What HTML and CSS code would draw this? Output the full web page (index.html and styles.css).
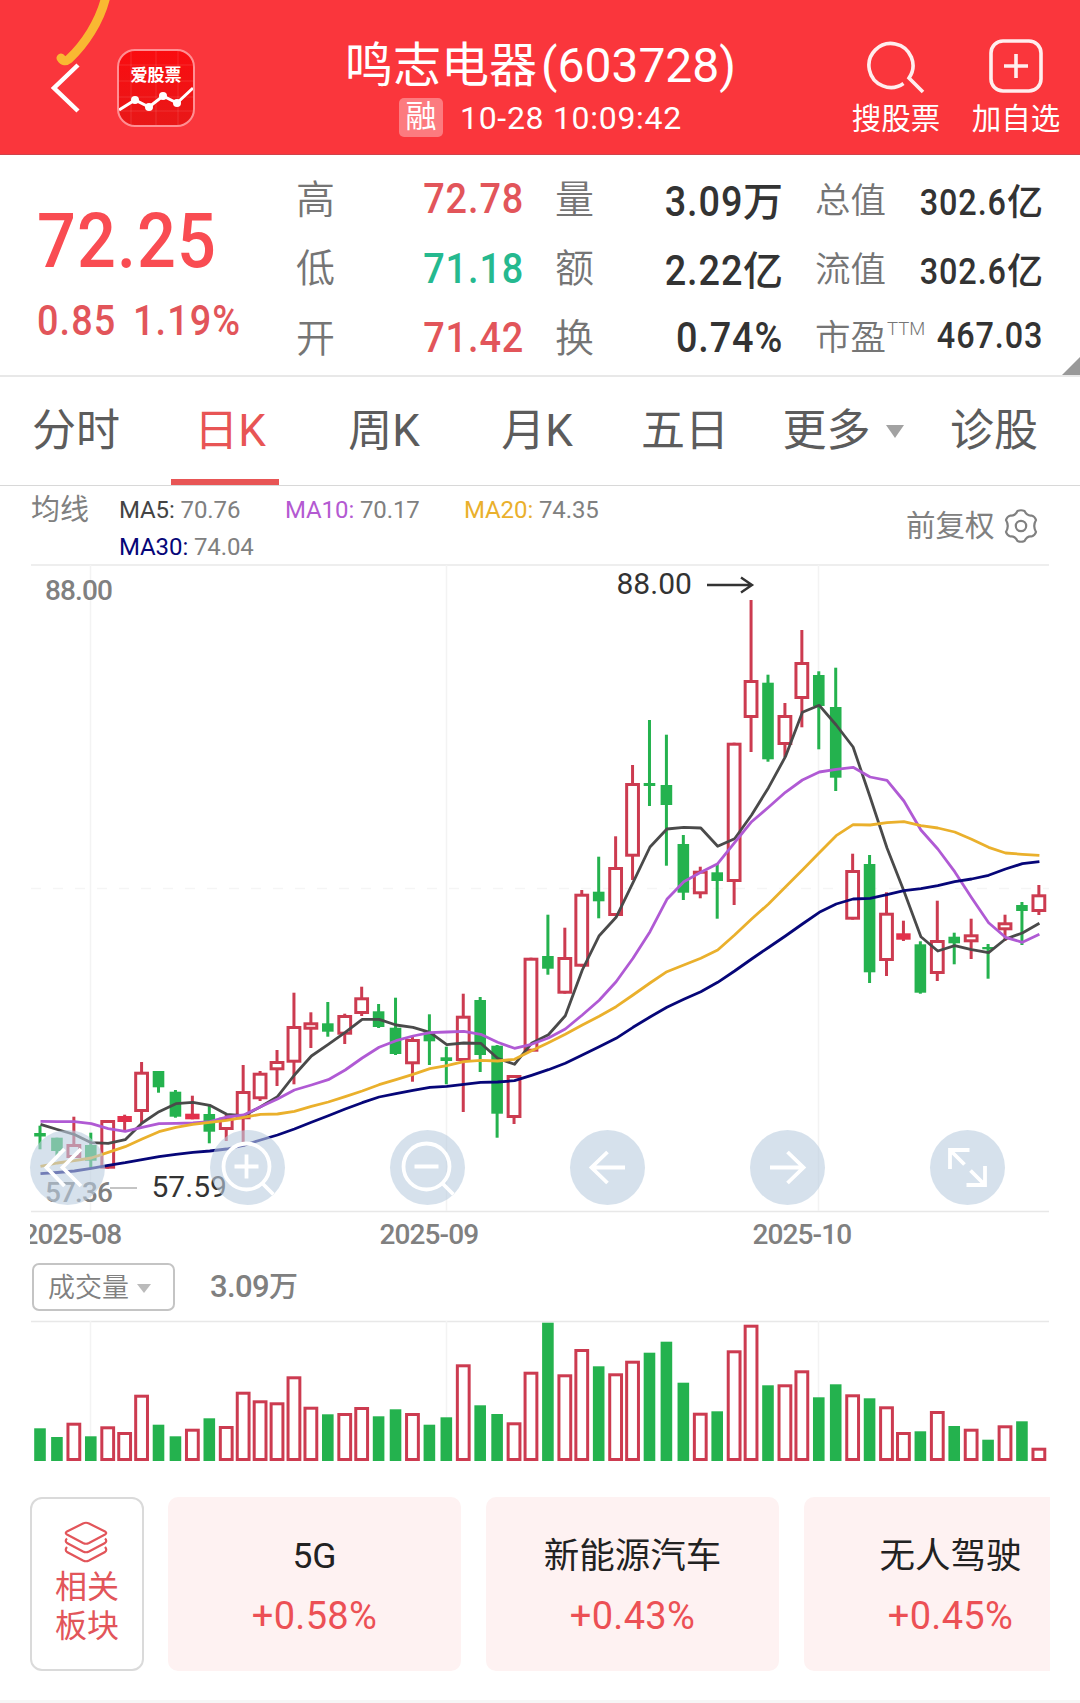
FILE: index.html
```html
<!DOCTYPE html>
<html lang="zh-CN">
<head>
    <meta charset="UTF-8">
    <meta name="viewport" content="width=device-width, initial-scale=1.0">
    <title>鸣志电器(603728)</title>
    <link rel="stylesheet" href="styles.css">
</head>
<body>
    <header class="header">
        <svg class="pen-mark" width="120" height="70" viewBox="0 0 120 70">
            <path d="M106 -4 C100 22 84 45 69 59 Q64 63 61 58"/>
        </svg>
        <svg class="back" width="34" height="54" viewBox="0 0 34 54">
            <path d="M29 4 L5 27 L29 50"/>
        </svg>
        <div class="app-logo">
            <span>爱股票</span>
            <svg width="74" height="74" viewBox="0 0 74 74">
                <path class="logo-grid" d="M12 0V74 M37 0V74 M59 0V74 M0 14H74 M0 30H74 M0 46H74 M0 60H74"/>
                <path class="logo-line" d="M0 59 L16 49 L30 56 L44 45 L58 52 L74 37"/>
                <circle cx="16" cy="49" r="4"/>
                <circle cx="30" cy="56" r="4"/>
                <circle cx="44" cy="45" r="4"/>
                <circle cx="58" cy="52" r="4"/>
            </svg>
        </div>
        <div class="title">
            <h1>鸣志电器<span>(603728)</span></h1>
            <div class="subtitle"><span class="badge">融</span><span class="time">10-28 10:09:42</span></div>
        </div>
        <div class="action search">
            <svg width="60" height="60" viewBox="0 0 60 60">
                <path d="M37.5 47.5 A22 22 0 1 1 43 42 L57 56"/>
            </svg>
            <span>搜股票</span>
        </div>
        <div class="action add">
            <svg width="60" height="60" viewBox="0 0 60 60">
                <rect x="5" y="5" width="50" height="50" rx="12"/>
                <path d="M30 18 V42 M18 30 H42"/>
            </svg>
            <span>加自选</span>
        </div>
    </header>

    <section class="quote">
        <div class="price">
            <div class="now">72.25</div>
            <div class="change">0.85 1.19%</div>
        </div>
        <dl class="stats first">
            <dt>高</dt><dd class="up"><b>72.78</b></dd>
            <dt>低</dt><dd class="down"><b>71.18</b></dd>
            <dt>开</dt><dd class="up"><b>71.42</b></dd>
        </dl>
        <dl class="stats second">
            <dt>量</dt><dd><b>3.09</b><i>万</i></dd>
            <dt>额</dt><dd><b>2.22</b><i>亿</i></dd>
            <dt>换</dt><dd><b>0.74%</b></dd>
        </dl>
        <dl class="stats third">
            <dt>总值</dt><dd><b>302.6</b><i>亿</i></dd>
            <dt>流值</dt><dd><b>302.6</b><i>亿</i></dd>
            <dt>市盈<sup>TTM</sup></dt><dd><b>467.03</b></dd>
        </dl>
        <span class="corner"></span>
    </section>

    <nav class="tabs">
        <a>分时</a>
        <a class="active">日K</a>
        <a>周K</a>
        <a>月K</a>
        <a>五日</a>
        <a>更多<span class="caret"></span></a>
        <a>诊股</a>
    </nav>

    <section class="ma-bar">
        <span class="ma-title">均线</span>
        <div class="ma-list">
            <span class="ma5"><b>MA5:</b> 70.76</span>
            <span class="ma10"><b>MA10:</b> 70.17</span>
            <span class="ma20"><b>MA20:</b> 74.35</span>
            <span class="ma30"><b>MA30:</b> 74.04</span>
        </div>
        <span class="adjust">前复权</span>
        <svg class="gear" width="36" height="36" viewBox="-18 -18 36 36">
            <path d="M-3.500 -15Q0 -16.500 3.500 -15Q6 -10 10.500 -10.500Q14 -9.500 15 -6Q11.500 0 15 6Q14 9.500 10.500 10.500Q6 10 3.500 15Q0 16.500 -3.500 15Q-6 10 -10.500 10.500Q-14 9.500 -15 6Q-11.500 0 -15 -6Q-14 -9.500 -10.500 -10.500Q-6 -10 -3.500 -15Z"/>
            <circle r="5.2"/>
        </svg>
    </section>

    <section class="chart">
        <svg id="kline" width="1080" height="690" viewBox="0 564 1080 690">
            <path class="frame" d="M31 565H1049"/>
            <path class="frame" d="M31 1211.5H1049"/>
            <path class="grid" d="M90.5 565V1211 M446.5 565V1211 M818.5 565V1211"/>
            <path class="dash" d="M31 888.5H1049"/>
            <text class="axis" x="45" y="600">88.00</text>
            <text class="axis" x="45" y="1201.5">57.36</text>
            <path class="low-line" d="M110 1188H137"/>
            <g id="candles"></g>
            <g id="lines"></g>
            <text class="mark" x="616.5" y="594">88.00</text>
            <path class="arrow" d="M707 585H752 M741 577.5L752 585L741 592.5"/>
            <text class="mark" x="151.5" y="1197">57.59</text>
            <svg x="30" y="1214" width="1020" height="40">
                <text class="axis" x="-7.5" y="30">2025-08</text>
                <text class="axis" x="349.5" y="30">2025-09</text>
                <text class="axis" x="722.5" y="30">2025-10</text>
            </svg>
        </svg>
        <div class="tools">
            <svg viewBox="-37.5 -37.5 75 75"><path d="M-3 -18.5L-21 0L-3 18.5 M13.5 -18.5L-5 0L13.5 18.5"/></svg>
            <svg viewBox="-37.5 -37.5 75 75"><circle cx="-1" cy="-1" r="23"/><path d="M-13 -1H11 M-1 -13V11 M15.5 16.5L26 27"/></svg>
            <svg viewBox="-37.5 -37.5 75 75"><circle cx="-1" cy="-1" r="23"/><path d="M-13 -1H11 M15.5 16.5L26 27"/></svg>
            <svg viewBox="-37.5 -37.5 75 75"><path d="M17.5 0H-16 M0 -15.5L-16 0L0 15.5"/></svg>
            <svg viewBox="-37.5 -37.5 75 75"><path d="M-17.5 0H16 M0 -15.5L16 0L0 15.5"/></svg>
            <svg viewBox="-37.5 -37.5 75 75"><path d="M2 -17.5H-17.5V1.5 M-17.5 -17.5L-3 -3 M-1 17.5H17.5V-1.5 M17.5 17.5L3 3"/></svg>
        </div>
    </section>

    <section class="volume-head">
        <div class="select">成交量<span class="caret"></span></div>
        <span class="vol-value">3.09<i>万</i></span>
    </section>

    <svg class="volume" width="1080" height="142" viewBox="0 1320 1080 142">
        <path class="frame" d="M31 1321.5H1049"/>
        <path class="grid" d="M90.5 1321V1461 M446.5 1321V1461 M818.5 1321V1461"/>
        <g id="bars"></g>
    </svg>

    <section class="sectors">
        <div class="related">
            <svg width="46" height="44" viewBox="0 0 46 44">
                <path d="M20 3.5Q23 2 26 3.5L42 11.5Q44.5 13 42 14.5L26 23Q23 24.5 20 23L4 14.5Q1.5 13 4 11.5Z"/>
                <path d="M4 18.5Q1.5 21 4 23L20 31.5Q23 33 26 31.5L42 23Q44.5 21 42 18.5"/>
                <path d="M4 27Q1.5 30 4 32L20 40.5Q23 42 26 40.5L42 32Q44.5 30 42 27"/>
            </svg>
            <span>相关</span>
            <span>板块</span>
        </div>
        <div class="card"><h3>5G</h3><p>+0.58%</p></div>
        <div class="card"><h3>新能源汽车</h3><p>+0.43%</p></div>
        <div class="card"><h3>无人驾驶</h3><p>+0.45%</p></div>
    </section>

    <script src="chart.js"></script>
</body>
</html>
```
FILE: styles.css
```css
* {
    box-sizing: border-box;
    margin: 0;
    padding: 0;
}

body {
    width: 1080px;
    height: 1703px;
    overflow: hidden;
    background: #fff;
    color: #333;
    font-family: Roboto, "Noto Sans CJK SC", sans-serif;
    border-bottom: 3px solid #f6f6f6;
}

i {
    font-style: normal;
}

svg {
    display: block;
    flex: none;
}

/* header */
.header {
    position: relative;
    display: flex;
    height: 155px;
    padding-left: 49px;
    background: #fa363c;
    border-bottom: 1px solid #d0424a;
    color: #fff;
}

.header svg path,
.header svg rect {
    fill: none;
    stroke: #ffeeee;
    stroke-width: 3.6;
}

.header .pen-mark {
    position: absolute;
    left: 0;
    top: 0;
}

.header .pen-mark path {
    stroke: #f9b832;
    stroke-width: 9;
    stroke-linecap: round;
}

.back {
    margin-top: 61px;
}

.header .back path {
    stroke: #fff;
    stroke-width: 4.5;
}

.app-logo {
    position: relative;
    width: 78px;
    height: 78px;
    margin: 49px 0 0 34px;
    border: 2px solid #ff8f93;
    border-radius: 18px;
    background: linear-gradient(#fa0c10, #e81818);
    overflow: hidden;
}

.app-logo span {
    position: absolute;
    top: 12px;
    left: 0;
    width: 100%;
    text-align: center;
    font-size: 17px;
    line-height: 24px;
    font-weight: 700;
}

.app-logo circle {
    fill: #fff;
}

.header .app-logo .logo-grid {
    stroke: rgba(255, 255, 255, 0.12);
    stroke-width: 1;
}

.header .app-logo .logo-line {
    stroke: #fff;
    stroke-width: 3;
}

.title {
    width: 390px;
    margin: 38px 0 0 150px;
}

.title h1 {
    font-size: 48px;
    line-height: 56px;
    font-weight: 400;
    white-space: nowrap;
}

.title h1 span {
    margin-left: 4px;
}

.subtitle {
    display: flex;
    align-items: center;
    margin: 3px 0 0 54px;
    font-size: 32px;
    line-height: 39px;
}

.badge {
    width: 44px;
    height: 39px;
    border-radius: 5px;
    background: #fc7b7f;
    text-align: center;
    font-size: 31px;
    line-height: 38px;
}

.time {
    margin: 2px 0 0 17px;
    letter-spacing: 0.7px;
    white-space: nowrap;
}

.action {
    display: flex;
    flex-direction: column;
    align-items: center;
    width: 120px;
    margin-top: 36px;
    font-size: 29.5px;
    line-height: 40px;
    white-space: nowrap;
}

.action span {
    margin-top: 3px;
}

.search {
    margin-left: 101px;
}

/* quote */
.quote {
    position: relative;
    display: flex;
    height: 222px;
    border-bottom: 2px solid #e8e8e8;
}

.price {
    width: 296px;
    padding: 41px 0 0 37px;
    color: #f94c52;
    font-weight: 500;
    white-space: nowrap;
}

/* narrow digits */
.now,
.change {
    transform: scaleX(0.9);
    transform-origin: left;
}

.stats b {
    display: inline-block;
    font-weight: 500;
    letter-spacing: 1px;
    transform: scaleX(0.9);
    transform-origin: right;
}

.now {
    font-size: 76px;
    line-height: 90px;
    letter-spacing: 1.2px;
}

.change {
    margin-top: 10px;
    color: #e2555a;
    font-size: 42px;
    line-height: 50px;
    letter-spacing: 1.2px;
    word-spacing: 7px;
}

.stats {
    display: grid;
    grid-template-columns: auto 1fr;
    grid-template-rows: repeat(3, 69.5px);
    align-items: center;
    padding-top: 9px;
    white-space: nowrap;
}

.stats dt {
    padding-bottom: 6px;
    color: #757575;
    font-size: 39px;
    font-weight: 350;
}

.stats dd {
    text-align: right;
    font-size: 42px;
    font-weight: 500;
}

.stats .up {
    color: #e2555a;
}

.stats .down {
    color: #25b98f;
}

.first {
    width: 228px;
}

.second {
    width: 228px;
    margin-left: 31px;
}

.second dd i {
    font-size: 40px;
}

.third {
    width: 228px;
    margin-left: 32px;
    grid-template-rows: 70px 67px 69px;
}

.third dt {
    padding-bottom: 3px;
    font-size: 35.5px;
}

.third dd {
    font-size: 36px;
}

.third b {
    margin-left: -16px;
}

.third sup {
    font-size: 18.5px;
    vertical-align: 15px;
    line-height: 0;
    margin-left: 1px;
}

.corner {
    position: absolute;
    right: 0;
    bottom: 0;
    border-left: 18px solid transparent;
    border-bottom: 18px solid #999;
}

/* tabs */
.tabs {
    display: grid;
    grid-template-columns: 152px 148px 168px 138px 158px 158px 144px;
    height: 109px;
    border-bottom: 1px solid #d8d8d8;
    font-size: 44px;
    line-height: 102px;
    color: #5c5c5c;
}

.tabs a {
    display: flex;
    justify-content: center;
    align-items: center;
    height: 108px;
}

.tabs .active {
    width: 108px;
    margin-left: 19px;
    padding: 6px 0 0 10px;
    border-bottom: 6px solid #e85555;
    color: #e85555;
}

.caret {
    border: 9px solid transparent;
    border-top: 13px solid #a2a2a2;
    border-bottom: 0;
    margin-left: 15px;
}

/* moving averages */
.ma-bar {
    display: flex;
    height: 78px;
    padding: 5px 0 0 31px;
    color: #808080;
    white-space: nowrap;
}

.ma-title {
    width: 88px;
    font-size: 29px;
    line-height: 38px;
}

.ma-list {
    display: grid;
    grid-template-columns: 166px 179px 442px;
    grid-template-rows: 37px 37px;
    width: 787px;
    font-size: 24px;
    line-height: 38px;
    letter-spacing: -0.1px;
}

.ma-list b {
    font-weight: 400;
}

.ma5 b {
    color: #444;
}

.ma10 b {
    color: #b45ad2;
}

.ma20 b {
    color: #eab02c;
}

.ma30 b {
    color: #060678;
}

.adjust {
    margin-top: 15px;
    font-size: 29.5px;
    line-height: 40px;
}

.gear {
    margin: 17px 0 0 8px;
    fill: none;
    stroke: #808080;
    stroke-width: 2.2;
}

/* k-line */
.chart {
    position: relative;
    height: 698px;
}

.frame {
    stroke: #e8e8e8;
    stroke-width: 1.5;
}

.grid {
    stroke: #f3f3f3;
    stroke-width: 1.5;
}

.dash {
    stroke: #f5f5f5;
    stroke-width: 1.5;
    stroke-dasharray: 10 12;
}

.axis {
    fill: #808080;
    font-size: 28px;
    font-weight: 500;
    letter-spacing: -0.9px;
}

.mark {
    fill: #333;
    font-size: 30px;
}

.low-line {
    stroke: #c4c4c4;
    stroke-width: 2;
}

.arrow {
    fill: none;
    stroke: #333;
    stroke-width: 2.4;
}

.hollow {
    fill: #fff;
    stroke: #cc3b50;
    stroke-width: 3;
}

.wick-up {
    fill: #cc3b50;
}

.solid-up {
    fill: #e2304b;
}

.fall {
    fill: #24b24e;
}

.line {
    fill: none;
    stroke-width: 2.8;
    stroke-linejoin: round;
}

.line5 {
    stroke: #4a4a4a;
}

.line10 {
    stroke: #b05ad4;
}

.line20 {
    stroke: #eab02c;
}

.line30 {
    stroke: #060678;
}

/* round buttons over the chart */
.tools {
    position: absolute;
    left: 30px;
    top: 566px;
    display: flex;
    gap: 105px;
}

.tools svg {
    width: 75px;
    height: 75px;
    border-radius: 50%;
    background: rgba(186, 205, 223, 0.6);
    fill: none;
    stroke: #fff;
    stroke-width: 3.8;
}

/* volume */
.volume-head {
    display: flex;
    align-items: center;
    height: 58px;
    padding: 0 0 8px 32px;
    color: #808080;
}

.select {
    display: flex;
    align-items: center;
    width: 143px;
    height: 48px;
    padding: 2px 0 0 14px;
    border: 2px solid #c4c4c4;
    border-radius: 7px;
    font-size: 27px;
    line-height: 40px;
    font-weight: 350;
    white-space: nowrap;
}

.select .caret {
    margin: 0 0 0 8px;
    border-width: 9px 7.5px 0;
    border-top-color: #bbb;
}

.vol-value {
    margin-left: 35px;
    font-size: 31px;
    font-weight: 500;
    line-height: 40px;
    letter-spacing: -0.6px;
}

.vol-value i {
    font-size: 29px;
}

/* sectors */
.sectors {
    display: flex;
    width: 1050px;
    margin-top: 35px;
    padding-left: 30px;
    overflow: hidden;
}

.related {
    display: flex;
    flex: none;
    flex-direction: column;
    align-items: center;
    width: 114px;
    height: 174px;
    padding-top: 21px;
    border: 2px solid #dadada;
    border-radius: 12px;
    color: #e2555a;
    font-size: 32px;
    line-height: 39px;
}

.related svg {
    margin: 0 2px 4px 0;
    fill: none;
    stroke: #e2555a;
    stroke-width: 2.2;
}

.card {
    flex: none;
    width: 293px;
    height: 174px;
    margin-left: 25px;
    padding-top: 33px;
    border-radius: 10px;
    background: #fef2f2;
    text-align: center;
}

.card:nth-child(2) {
    margin-left: 24px;
}

.card h3 {
    color: #222;
    font-size: 35.5px;
    font-weight: 400;
    line-height: 52px;
}

.card p {
    margin-top: 9px;
    color: #ec5055;
    font-size: 38px;
    line-height: 50px;
    letter-spacing: 0.3px;
}
```
FILE: chart.js
```js
// [type, high, top, bottom, low], r = rise, g = fall
var candles = [
    ['g', 1125.7, 1133, 1136.5, 1149.3], ['g', 1137.7, 1137.7, 1151, 1156], ['r', 1116.7, 1144, 1158, 1158],
    ['g', 1132.7, 1145, 1160.7, 1168.3], ['r', 1120, 1120, 1168.7, 1168.7], ['r', 1114.7, 1116, 1122, 1130],
    ['r', 1062, 1071.7, 1112, 1124], ['g', 1071, 1071, 1087.3, 1092.7], ['g', 1090, 1091.7, 1116.7, 1117.7],
    ['r', 1095.7, 1113.7, 1119.3, 1119.3], ['g', 1106, 1114, 1131.7, 1143.3], ['r', 1115, 1117.7, 1130, 1141],
    ['r', 1065, 1091, 1119.3, 1146.7], ['r', 1071, 1072.7, 1099.3, 1101], ['r', 1050, 1061, 1070.3, 1086],
    ['r', 992.7, 1026, 1062.7, 1084.3], ['r', 1012.3, 1022.3, 1029.7, 1048], ['g', 1002, 1023.3, 1031.7, 1036.7],
    ['r', 1013.7, 1015, 1034.7, 1044], ['r', 986.7, 997.3, 1014, 1016], ['g', 1004, 1011.3, 1027, 1028],
    ['g', 997.7, 1027.7, 1054, 1055], ['r', 1036.7, 1039, 1064.3, 1081.7], ['g', 1014.3, 1032.3, 1041.3, 1065],
    ['g', 1046.7, 1057.3, 1061, 1084.3], ['r', 993.7, 1015.7, 1061, 1112], ['g', 997, 1000, 1055, 1072],
    ['g', 1045, 1045.7, 1113.7, 1137.7], ['r', 1075, 1075, 1118, 1124], ['r', 957.7, 957.7, 1051.7, 1051.7],
    ['g', 914.7, 956, 968.7, 974.7], ['r', 927.7, 957, 993.7, 993.7], ['r', 890, 893.7, 966.7, 966.7],
    ['g', 856.7, 891.7, 901.3, 918.3], ['r', 836.3, 867, 916, 916], ['r', 765, 783, 856.7, 880],
    ['g', 720, 783, 786, 806], ['g', 734.7, 785, 805, 865.7], ['g', 835, 844, 892.7, 900],
    ['r', 866.7, 870.7, 894.3, 898.3], ['g', 864, 872.3, 881, 918.7], ['r', 742.7, 742.7, 882, 905],
    ['r', 600, 680, 718, 752], ['g', 674.7, 682.7, 759.3, 761.7], ['r', 703, 715, 745, 757],
    ['r', 630, 662, 699, 727.3], ['g', 671.3, 675, 706, 749.3], ['g', 667.7, 707, 777.7, 791],
    ['r', 853.7, 870, 919.7, 919.7], ['g', 855, 864, 972.3, 983], ['r', 892.3, 912.7, 961, 976],
    ['r', 920.7, 933.3, 939.7, 941], ['g', 941.3, 944.3, 992.7, 993.7], ['r', 900.7, 940, 974, 981],
    ['g', 932.7, 936.7, 943.3, 964.3], ['r', 918.7, 934.3, 942.3, 959], ['g', 944, 947, 949.3, 978.7],
    ['r', 914.7, 922.3, 930.3, 941], ['g', 902, 905, 911, 945], ['r', 885, 894.3, 912, 915]
];

var ma5 = [1124.3, 1129.5, 1134.5, 1142.7, 1143.3, 1139.7, 1123, 1111.7, 1103.7, 1102.3, 1105.3, 1114.3, 1115.7, 1106.7, 1096.7,
    1075, 1056, 1044.3, 1032.3, 1019.3, 1019.3, 1025, 1027.3, 1032.3, 1044.7, 1043, 1043.3, 1058.3, 1064.3, 1043.3,
    1034.7, 1015.7, 970, 935.7, 917.3, 882.7, 847, 829, 827.3, 828, 846.3, 838.7, 815, 787.7, 756.7,
    712.3, 705.3, 725, 747, 797, 848, 891, 936.7, 951, 945.7, 949.7, 952.7, 939, 933, 923.3];

var ma10 = [1121.3, 1121.7, 1121.7, 1123.7, 1128.7, 1131.3, 1127.3, 1123.7, 1123.3, 1123, 1121.7, 1117, 1115, 1106.7, 1099,
    1090, 1085, 1079.7, 1070, 1058, 1047.3, 1040.7, 1036, 1032.7, 1032, 1031.3, 1034.3, 1042.3, 1048.3, 1044.3,
    1038, 1029, 1015, 1000.3, 981.7, 958.3, 931.7, 899.3, 881.7, 872.3, 863.7, 842.7, 821.7, 807.3, 792.3,
    780, 772, 769.3, 767.3, 777, 780.3, 801, 830, 849, 871.7, 897.7, 922.7, 937.3, 942.3, 934.3];

var ma20 = [1166.3, 1163, 1160.7, 1158, 1152.3, 1146.7, 1139, 1131.7, 1127.3, 1124.3, 1122.3, 1120.3, 1117.3, 1114.3, 1114,
    1111.3, 1106.3, 1102, 1096.7, 1091, 1084.7, 1079.7, 1074.3, 1068.7, 1065.7, 1061.7, 1060.3, 1061, 1059.3, 1050.7,
    1042.7, 1034.3, 1025, 1016.3, 1006.7, 995, 983, 971.7, 965, 958.3, 950, 935, 919, 904, 887,
    870, 852.7, 835.7, 824.7, 825, 822.7, 821.7, 825.7, 828, 832, 839.3, 847.3, 853, 854.3, 855.3];

var ma30 = [1173.7, 1172.5, 1171, 1168.3, 1165.3, 1162.7, 1159.7, 1156.7, 1154.3, 1152.3, 1151, 1149, 1145.3, 1140, 1135,
    1129, 1122.3, 1115.7, 1109, 1102.7, 1097, 1093.7, 1090.3, 1087.3, 1086.3, 1084.3, 1082.3, 1082, 1080.7, 1075.3,
    1069.7, 1063.3, 1055, 1046.7, 1038.3, 1027.3, 1017, 1007.3, 999.3, 991.7, 982.3, 971, 959, 947.5, 936,
    924, 912.3, 904, 899, 898.3, 894.7, 890.7, 888.7, 885.7, 881.7, 879, 875.3, 869, 863.7, 861.7];

var volumes = [32.7, 24, 38.3, 24.7, 34.7, 29, 66.3, 36.3, 24.7, 32.3, 42.7, 35, 69.3, 60.7, 58.7,
    84.7, 54.3, 46.7, 48, 54, 44.7, 51.7, 48, 36.3, 43.7, 96.7, 55.7, 47, 38.7, 89.3,
    138.3, 86.7, 112, 94.7, 87.7, 100.3, 108.3, 119.3, 78.3, 48.3, 49.7, 110.7, 136.3, 75.7, 76.7,
    90.7, 63.7, 76.7, 66.7, 62.7, 54.7, 29, 29.7, 50, 35, 32.3, 21.3, 35.7, 39.7, 13.3];

function xAt(i) {
    return 40 + i * 16.93;
}

function rect(cls, x, y, w, h) {
    return '<rect class="' + cls + '" x="' + x.toFixed(2) + '" y="' + y.toFixed(2) +
        '" width="' + w + '" height="' + h.toFixed(2) + '"/>';
}

// hollow red or filled green body
function body(type, x, top, bottom) {
    if (type === 'g') {
        return rect('fall', x - 5.8, top, 11.6, bottom - top);
    }
    if (bottom - top < 7) {
        return rect('solid-up', x - 7.2, top, 14.4, bottom - top);
    }
    return rect('hollow', x - 5.9, top + 1.5, 11.8, bottom - top - 3);
}

var candleHtml = '';
var barHtml = '';
candles.forEach(function (c, i) {
    var x = xAt(i);
    candleHtml += rect(c[0] === 'g' ? 'fall' : 'wick-up', x - 1.5, c[1], 3, c[4] - c[1]);
    candleHtml += body(c[0], x, c[2], c[3]);
    barHtml += body(c[0], x, 1461 - volumes[i], 1461);
});
document.getElementById('candles').innerHTML = candleHtml;
document.getElementById('bars').innerHTML = barHtml;

function line(cls, values) {
    var points = values.map(function (y, i) {
        return (xAt(i) + 0.5).toFixed(1) + ',' + y;
    });
    return '<polyline class="line ' + cls + '" points="' + points.join(' ') + '"/>';
}

document.getElementById('lines').innerHTML =
    line('line5', ma5) + line('line10', ma10) + line('line20', ma20) + line('line30', ma30);
```
